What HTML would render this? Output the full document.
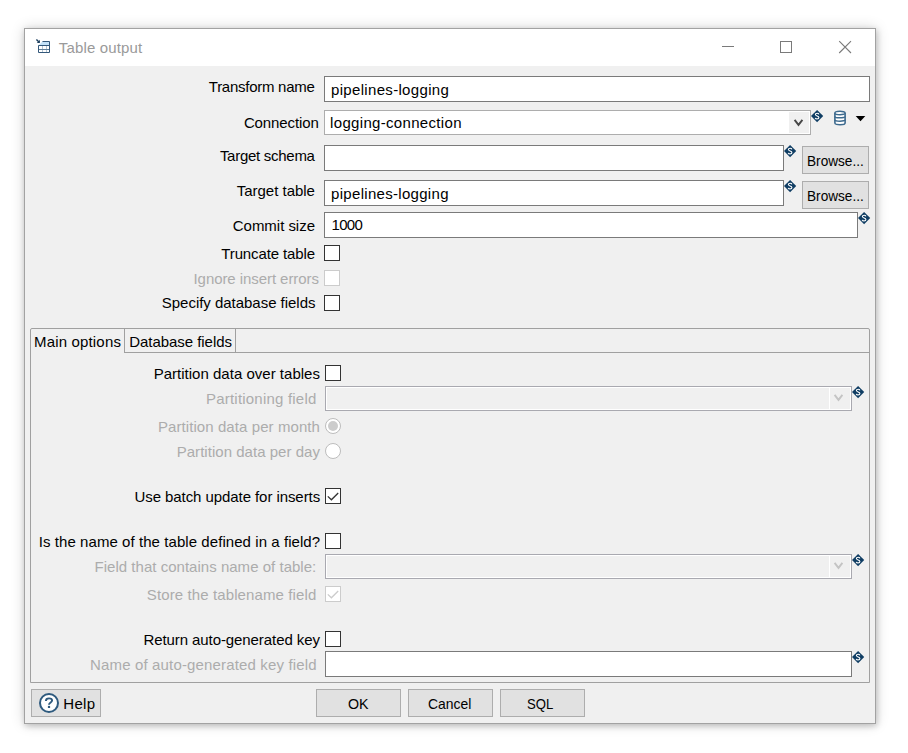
<!DOCTYPE html>
<html><head><meta charset="utf-8"><style>
html,body{margin:0;padding:0;background:#fff;width:908px;height:753px;overflow:hidden;position:relative}
.t{position:absolute;font-family:"Liberation Sans",sans-serif;font-size:15px;line-height:18px;white-space:nowrap}
.b{position:absolute;box-sizing:content-box}
.i{position:absolute;display:block}
</style></head><body>
<div class="b" style="left:24px;top:28px;width:850px;height:694px;border:1px solid #a2a2a2;background:#f0f0f0;box-shadow:0 0 13px rgba(0,0,0,0.16), 1px 2px 6px rgba(0,0,0,0.2)"></div>
<div class="b" style="left:25px;top:29px;width:850px;height:37px;background:#fff"></div>
<svg class="i" style="left:33px;top:36px" width="20" height="20" viewBox="0 0 20 20">
<path d="M9.5 5.5 H16.5 V9.5 H5.5 Z" fill="#c4e2f8"/>
<path d="M9.5 10 V16 M13.5 10 V16" stroke="#b4c6d4" stroke-width="1"/>
<path d="M6 13.5 H16" stroke="#5f7f99" stroke-width="1"/>
<path d="M9.5 5.5 H16.5 V16.5 H5.5 V9.5 H16.5" fill="none" stroke="#34587a" stroke-width="1"/>
<path d="M3.4 3.4 L6.2 6.2" stroke="#1d3f5e" stroke-width="1.4"/>
<path d="M6.9 3.8 V6.9 H3.8 Z" fill="#1d3f5e"/>
</svg>
<div class="b" style="left:722px;top:46px;width:12px;height:1px;background:#7a7a7a"></div>
<div class="b" style="left:780px;top:41px;width:10px;height:10px;border:1px solid #7a7a7a;background:transparent;"></div>
<svg class="i" style="left:838px;top:40px" width="15" height="15" viewBox="0 0 15 15"><path d="M1.2 1.2 L13 13 M13 1.2 L1.2 13" stroke="#7a7a7a" stroke-width="1.1"/></svg>
<div class="b" style="left:324px;top:76px;width:544px;height:24px;border:1px solid #7a7a7a;background:#fff;"></div>
<div class="b" style="left:324px;top:110px;width:485px;height:23px;border:1px solid #adadad;background:#fff;"></div>
<div class="b" style="left:789px;top:112px;width:20px;height:21px;background:#f0f0f0"></div>
<svg class="i" style="left:791px;top:117px" width="14" height="12" viewBox="0 0 14 12"><path d="M3.60 2.80 L7.50 7.90 L11.40 2.80" fill="none" stroke="#474747" stroke-width="1.9"/></svg>
<svg class="i" style="left:811px;top:110px" width="13" height="13" viewBox="0 0 13 13"><path d="M6.1 0 L12.2 6.1 L6.1 12.2 L0 6.1 Z" fill="#0f3d63"/><path d="M7.9 4.3 C7.7 3.6 7.1 3.3 6.1 3.3 C5.1 3.3 4.4 3.8 4.4 4.6 C4.4 6.2 7.9 5.6 7.9 7.4 C7.9 8.3 7.1 8.9 6.1 8.9 C5.1 8.9 4.4 8.5 4.2 7.8" fill="none" stroke="#fff" stroke-width="1.1"/></svg>
<svg class="i" style="left:834px;top:110px" width="12" height="16" viewBox="0 0 12 16">
<path d="M0.9 3 C0.9 0.7 11.1 0.7 11.1 3 V13 C11.1 15.3 0.9 15.3 0.9 13 Z" fill="#fff" stroke="#3d6a8e" stroke-width="1.6"/>
<path d="M0.9 3.2 C0.9 5.1 11.1 5.1 11.1 3.2 M0.9 6.4 C0.9 8.3 11.1 8.3 11.1 6.4 M0.9 9.7 C0.9 11.6 11.1 11.6 11.1 9.7" fill="none" stroke="#3d6a8e" stroke-width="1.5"/>
</svg>
<svg class="i" style="left:855px;top:116px" width="11" height="6" viewBox="0 0 11 6"><path d="M0.7 0 H10.3 L5.5 5.2 Z" fill="#000"/></svg>
<div class="b" style="left:324px;top:145px;width:458px;height:24px;border:1px solid #7a7a7a;background:#fff;"></div>
<svg class="i" style="left:784px;top:145px" width="13" height="13" viewBox="0 0 13 13"><path d="M6.1 0 L12.2 6.1 L6.1 12.2 L0 6.1 Z" fill="#0f3d63"/><path d="M7.9 4.3 C7.7 3.6 7.1 3.3 6.1 3.3 C5.1 3.3 4.4 3.8 4.4 4.6 C4.4 6.2 7.9 5.6 7.9 7.4 C7.9 8.3 7.1 8.9 6.1 8.9 C5.1 8.9 4.4 8.5 4.2 7.8" fill="none" stroke="#fff" stroke-width="1.1"/></svg>
<div class="b" style="left:802px;top:146px;width:65px;height:26px;border:1px solid #adadad;background:#e1e1e1;"></div>
<div class="b" style="left:324px;top:180px;width:458px;height:24px;border:1px solid #7a7a7a;background:#fff;"></div>
<svg class="i" style="left:784px;top:180px" width="13" height="13" viewBox="0 0 13 13"><path d="M6.1 0 L12.2 6.1 L6.1 12.2 L0 6.1 Z" fill="#0f3d63"/><path d="M7.9 4.3 C7.7 3.6 7.1 3.3 6.1 3.3 C5.1 3.3 4.4 3.8 4.4 4.6 C4.4 6.2 7.9 5.6 7.9 7.4 C7.9 8.3 7.1 8.9 6.1 8.9 C5.1 8.9 4.4 8.5 4.2 7.8" fill="none" stroke="#fff" stroke-width="1.1"/></svg>
<div class="b" style="left:802px;top:181px;width:65px;height:26px;border:1px solid #adadad;background:#e1e1e1;"></div>
<div class="b" style="left:324px;top:212px;width:532px;height:24px;border:1px solid #7a7a7a;background:#fff;"></div>
<svg class="i" style="left:858px;top:212px" width="13" height="13" viewBox="0 0 13 13"><path d="M6.1 0 L12.2 6.1 L6.1 12.2 L0 6.1 Z" fill="#0f3d63"/><path d="M7.9 4.3 C7.7 3.6 7.1 3.3 6.1 3.3 C5.1 3.3 4.4 3.8 4.4 4.6 C4.4 6.2 7.9 5.6 7.9 7.4 C7.9 8.3 7.1 8.9 6.1 8.9 C5.1 8.9 4.4 8.5 4.2 7.8" fill="none" stroke="#fff" stroke-width="1.1"/></svg>
<div class="b" style="left:324px;top:245px;width:14px;height:14px;border:1px solid #333333;background:#fff;"></div>
<div class="b" style="left:324px;top:270px;width:14px;height:14px;border:1px solid #cccccc;background:#fff;"></div>
<div class="b" style="left:324px;top:295px;width:14px;height:14px;border:1px solid #333333;background:#fff;"></div>
<div class="b" style="left:30px;top:328px;width:838px;height:353px;border:1px solid #a0a0a0;background:#f0f0f0;border-top-left-radius:2px;border-top-right-radius:2px;"></div>
<div class="b" style="left:124px;top:352px;width:745px;height:1px;background:#a0a0a0"></div>
<div class="b" style="left:124px;top:329px;width:1px;height:24px;background:#a0a0a0"></div>
<div class="b" style="left:235px;top:329px;width:1px;height:24px;background:#a0a0a0"></div>
<div class="b" style="left:325px;top:365px;width:14px;height:14px;border:1px solid #333333;background:#fff;"></div>
<div class="b" style="left:325px;top:386px;width:525px;height:23px;border:1px solid #a9a9b0;background:#f0f0f0;box-shadow:inset 0 0 0 1px #fff;"></div>
<div class="b" style="left:829px;top:387px;width:1px;height:23px;background:#fff"></div>
<svg class="i" style="left:831px;top:392px" width="14" height="12" viewBox="0 0 14 12"><path d="M3.60 2.80 L7.50 7.90 L11.40 2.80" fill="none" stroke="#c4c4c4" stroke-width="1.9"/></svg>
<svg class="i" style="left:852px;top:386px" width="13" height="13" viewBox="0 0 13 13"><path d="M6.1 0 L12.2 6.1 L6.1 12.2 L0 6.1 Z" fill="#0f3d63"/><path d="M7.9 4.3 C7.7 3.6 7.1 3.3 6.1 3.3 C5.1 3.3 4.4 3.8 4.4 4.6 C4.4 6.2 7.9 5.6 7.9 7.4 C7.9 8.3 7.1 8.9 6.1 8.9 C5.1 8.9 4.4 8.5 4.2 7.8" fill="none" stroke="#fff" stroke-width="1.1"/></svg>
<svg class="i" style="left:325px;top:418px" width="16" height="16" viewBox="0 0 16 16"><circle cx="8" cy="8" r="7.5" fill="#fff" stroke="#bcbcbc" stroke-width="1"/><circle cx="8" cy="8" r="5" fill="#cccccc"/></svg>
<svg class="i" style="left:325px;top:443px" width="16" height="16" viewBox="0 0 16 16"><circle cx="8" cy="8" r="7.5" fill="#fff" stroke="#bcbcbc" stroke-width="1"/></svg>
<div class="b" style="left:325px;top:488px;width:14px;height:14px;border:1px solid #333333;background:#fff;"></div>
<svg class="i" style="left:325px;top:488px" width="16" height="16" viewBox="0 0 16 16"><path d="M2.8 8.4 L6.4 11.8 L13.2 5" fill="none" stroke="#333333" stroke-width="1.3"/></svg>
<div class="b" style="left:325px;top:533px;width:14px;height:14px;border:1px solid #333333;background:#fff;"></div>
<div class="b" style="left:325px;top:554px;width:525px;height:23px;border:1px solid #a9a9b0;background:#f0f0f0;box-shadow:inset 0 0 0 1px #fff;"></div>
<div class="b" style="left:829px;top:555px;width:1px;height:23px;background:#fff"></div>
<svg class="i" style="left:831px;top:560px" width="14" height="12" viewBox="0 0 14 12"><path d="M3.60 2.80 L7.50 7.90 L11.40 2.80" fill="none" stroke="#c4c4c4" stroke-width="1.9"/></svg>
<svg class="i" style="left:852px;top:554px" width="13" height="13" viewBox="0 0 13 13"><path d="M6.1 0 L12.2 6.1 L6.1 12.2 L0 6.1 Z" fill="#0f3d63"/><path d="M7.9 4.3 C7.7 3.6 7.1 3.3 6.1 3.3 C5.1 3.3 4.4 3.8 4.4 4.6 C4.4 6.2 7.9 5.6 7.9 7.4 C7.9 8.3 7.1 8.9 6.1 8.9 C5.1 8.9 4.4 8.5 4.2 7.8" fill="none" stroke="#fff" stroke-width="1.1"/></svg>
<div class="b" style="left:325px;top:586px;width:14px;height:14px;border:1px solid #cccccc;background:#fff;"></div>
<svg class="i" style="left:325px;top:586px" width="16" height="16" viewBox="0 0 16 16"><path d="M2.8 8.4 L6.4 11.8 L13.2 5" fill="none" stroke="#cccccc" stroke-width="1.3"/></svg>
<div class="b" style="left:325px;top:631px;width:14px;height:14px;border:1px solid #333333;background:#fff;"></div>
<div class="b" style="left:325px;top:651px;width:525px;height:24px;border:1px solid #7a7a7a;background:#fff;"></div>
<svg class="i" style="left:852px;top:651px" width="13" height="13" viewBox="0 0 13 13"><path d="M6.1 0 L12.2 6.1 L6.1 12.2 L0 6.1 Z" fill="#0f3d63"/><path d="M7.9 4.3 C7.7 3.6 7.1 3.3 6.1 3.3 C5.1 3.3 4.4 3.8 4.4 4.6 C4.4 6.2 7.9 5.6 7.9 7.4 C7.9 8.3 7.1 8.9 6.1 8.9 C5.1 8.9 4.4 8.5 4.2 7.8" fill="none" stroke="#fff" stroke-width="1.1"/></svg>
<div class="b" style="left:31px;top:689px;width:68px;height:26px;border:1px solid #adadad;background:#e1e1e1;"></div>
<svg class="i" style="left:37px;top:691px" width="24" height="24" viewBox="0 0 24 24">
<circle cx="12" cy="12" r="9" fill="#fff" stroke="#2e5a7e" stroke-width="2"/>
<path d="M8.9 9.9 C8.9 8.1 10.2 7.4 12 7.4 C13.8 7.4 15.1 8.2 15.1 9.6 C15.1 11.4 12 11.6 12 13.8" fill="none" stroke="#2e5a7e" stroke-width="1.9"/>
<rect x="10.9" y="14.9" width="2.2" height="2.1" fill="#2e5a7e"/>
</svg>
<div class="b" style="left:316px;top:689px;width:83px;height:26px;border:1px solid #adadad;background:#e1e1e1;"></div>
<div class="b" style="left:408px;top:689px;width:83px;height:26px;border:1px solid #adadad;background:#e1e1e1;"></div>
<div class="b" style="left:500px;top:689px;width:83px;height:26px;border:1px solid #adadad;background:#e1e1e1;"></div>
<div class="t" style="left:58.80px;top:39px;color:#9a9a9a;letter-spacing:0.150px">Table output</div>
<div class="t" style="left:208.80px;top:78px;color:#000;letter-spacing:-0.269px">Transform name</div>
<div class="t" style="left:243.90px;top:114px;color:#000;letter-spacing:-0.110px">Connection</div>
<div class="t" style="left:219.90px;top:147px;color:#000;letter-spacing:-0.276px">Target schema</div>
<div class="t" style="left:236.70px;top:182px;color:#000;letter-spacing:-0.010px">Target table</div>
<div class="t" style="left:232.80px;top:217px;color:#000;letter-spacing:-0.032px">Commit size</div>
<div class="t" style="left:221.30px;top:245px;color:#000;letter-spacing:-0.126px">Truncate table</div>
<div class="t" style="left:193.50px;top:270px;color:#acacac;letter-spacing:-0.067px">Ignore insert errors</div>
<div class="t" style="left:161.80px;top:294px;color:#000;letter-spacing:-0.026px">Specify database fields</div>
<div class="t" style="left:34.00px;top:333px;color:#000;letter-spacing:0.167px">Main options</div>
<div class="t" style="left:129.20px;top:333px;color:#000;letter-spacing:-0.043px">Database fields</div>
<div class="t" style="left:153.70px;top:365px;color:#000;letter-spacing:0.013px">Partition data over tables</div>
<div class="t" style="left:206.00px;top:390px;color:#acacac;letter-spacing:0.210px">Partitioning field</div>
<div class="t" style="left:157.90px;top:418px;color:#acacac;letter-spacing:0.085px">Partition data per month</div>
<div class="t" style="left:176.70px;top:443px;color:#acacac;letter-spacing:0.032px">Partition data per day</div>
<div class="t" style="left:134.50px;top:488px;color:#000;letter-spacing:-0.072px">Use batch update for inserts</div>
<div class="t" style="left:38.75px;top:533px;color:#000;letter-spacing:0.066px">Is the name of the table defined in a field?</div>
<div class="t" style="left:94.50px;top:558px;color:#acacac;letter-spacing:0.024px">Field that contains name of table:</div>
<div class="t" style="left:146.80px;top:586px;color:#acacac;letter-spacing:0.112px">Store the tablename field</div>
<div class="t" style="left:143.40px;top:631px;color:#000;letter-spacing:-0.079px">Return auto-generated key</div>
<div class="t" style="left:90.00px;top:656px;color:#acacac;letter-spacing:0.156px">Name of auto-generated key field</div>
<div class="t" style="left:331.00px;top:81px;color:#000;letter-spacing:0.326px">pipelines-logging</div>
<div class="t" style="left:330.10px;top:114px;color:#000;letter-spacing:0.321px">logging-connection</div>
<div class="t" style="left:331.10px;top:185px;color:#000;letter-spacing:0.301px">pipelines-logging</div>
<div class="t" style="left:331.50px;top:216px;color:#000;letter-spacing:-0.658px">1000</div>
<div class="t" style="left:807.40px;top:152px;color:#000;transform-origin:0 0;transform:scaleX(0.9085)">Browse...</div>
<div class="t" style="left:807.40px;top:187px;color:#000;transform-origin:0 0;transform:scaleX(0.9085)">Browse...</div>
<div class="t" style="left:63.30px;top:695px;color:#000;letter-spacing:0.319px">Help</div>
<div class="t" style="left:348.10px;top:695px;color:#000;transform-origin:0 0;transform:scaleX(0.9481)">OK</div>
<div class="t" style="left:428.00px;top:695px;color:#000;transform-origin:0 0;transform:scaleX(0.9280)">Cancel</div>
<div class="t" style="left:526.70px;top:695px;color:#000;transform-origin:0 0;transform:scaleX(0.8754)">SQL</div>
</body></html>
